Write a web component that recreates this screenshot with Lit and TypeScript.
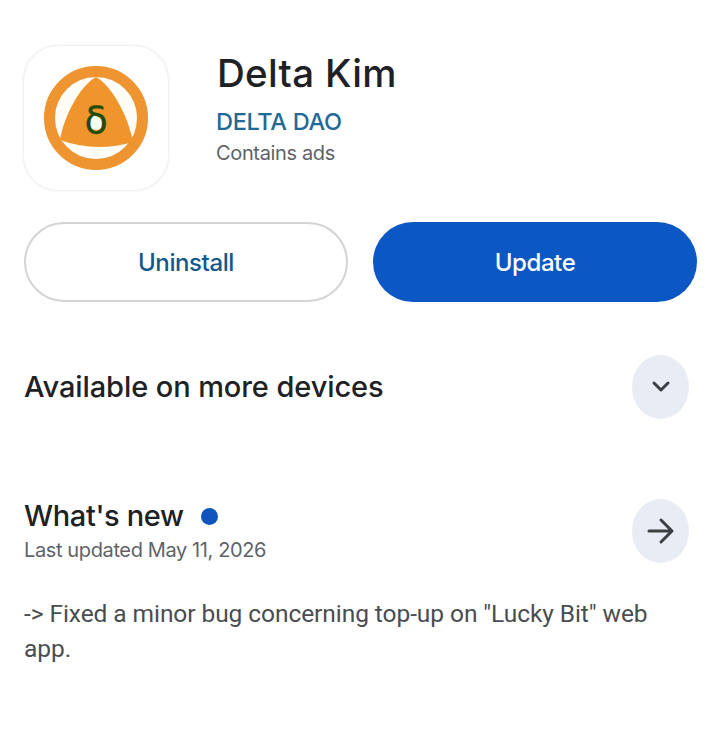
import { LitElement, html, css } from "lit";
import { customElement } from "lit/decorators.js";

@customElement("app-root")
export class AppRoot extends LitElement {
  static styles = css`
    :host {
      display: block;
      height: 733px;
      overflow: hidden;
      background: #fff;
      font-family: Inter, Roboto, sans-serif;
      color: #202124;
    }

    .page {
      padding: 46px 23px 0 24px;
    }

    /* ── Header ── */

    .header {
      display: flex;
      gap: 48px;
    }

    .logo {
      width: 144px;
      height: 144px;
      flex: none;
      border-radius: 34px;
      background: #fff;
      box-shadow: 0 0 3px rgba(0, 0, 0, 0.16);
      display: flex;
      align-items: center;
      justify-content: center;
    }

    .logo svg {
      display: block;
    }

    .meta {
      display: flex;
      flex-direction: column;
    }

    .name {
      font-size: 38.5px;
      font-weight: 500;
      line-height: 46px;
      margin: 4px 0 0 1px;
      letter-spacing: 0.3px;
      color: #202124;
    }

    .dev {
      font-size: 23.5px;
      font-weight: 500;
      line-height: 30px;
      margin-top: 11px;
      letter-spacing: -0.3px;
      color: #1f6a96;
    }

    .ads {
      font-size: 20px;
      line-height: 26px;
      margin-top: 3px;
      letter-spacing: -0.35px;
      color: #5f6368;
    }

    /* ── Buttons ── */

    .buttons {
      display: grid;
      grid-template-columns: 1fr 1fr;
      gap: 25px;
      margin-top: 32px;
    }

    .btn {
      height: 80px;
      box-sizing: border-box;
      border-radius: 40px;
      display: flex;
      align-items: center;
      justify-content: center;
      font-size: 24px;
      font-weight: 500;
      letter-spacing: -0.4px;
    }

    .btn.outline {
      border: 2px solid #d2d4d6;
      color: #14588a;
      background: #fff;
    }

    .btn.fill {
      background: #0b57c4;
      color: #fff;
    }

    /* ── Rows ── */

    .row {
      display: flex;
      align-items: center;
      justify-content: space-between;
      padding-right: 8px;
    }

    .row.devices {
      margin-top: 53px;
    }

    .row.whats {
      margin-top: 80px;
    }

    .row-title {
      font-size: 29px;
      font-weight: 500;
      line-height: 36px;
      letter-spacing: -0.09px;
      color: #202124;
    }

    .whats .row-title {
      letter-spacing: -0.35px;
    }

    .round {
      width: 57px;
      height: 64px;
      flex: none;
      border-radius: 50%;
      background: #e8ecf4;
      display: flex;
      align-items: center;
      justify-content: center;
    }

    .title-line {
      display: flex;
      align-items: center;
      gap: 17px;
      margin-top: -1px;
    }

    .dot {
      width: 17px;
      height: 17px;
      border-radius: 50%;
      background: #0f55bd;
    }

    .updated {
      font-size: 20px;
      line-height: 26px;
      margin-top: 3px;
      letter-spacing: -0.38px;
      color: #5f6368;
    }

    .notes {
      font-family: Roboto, sans-serif;
      font-size: 24.5px;
      line-height: 35px;
      margin-top: 33px;
      letter-spacing: -0.07px;
      color: #4a4d50;
    }
  `;

  render() {
    return html`
      <div class="page">
        <div class="header">
          <div class="logo">
            <svg width="106" height="106" viewBox="0 0 106 106">
              <circle cx="53" cy="53" r="46.5" fill="#fffdf6" stroke="#ee9430" stroke-width="11" />
              <path
                d="M53 12 C68 20 85 50 90 77 Q53 88 17 75 C21 50 38 20 53 12 Z"
                fill="#f0952c"
              />
              <circle cx="53" cy="57" r="8" fill="#f4fff0" />
              <text
                x="53"
                y="68"
                text-anchor="middle"
                font-family="'DejaVu Sans', sans-serif"
                font-size="38"
                fill="#1f4d0c"
                stroke="#1f4d0c"
                stroke-width="0.3"
              >δ</text>
            </svg>
          </div>
          <div class="meta">
            <div class="name">Delta Kim</div>
            <div class="dev">DELTA DAO</div>
            <div class="ads">Contains ads</div>
          </div>
        </div>

        <div class="buttons">
          <div class="btn outline">Uninstall</div>
          <div class="btn fill">Update</div>
        </div>

        <div class="row devices">
          <div class="row-title">Available on more devices</div>
          <div class="round">
            <svg width="20" height="14" viewBox="0 0 20 14">
              <path d="M3 3 L10 10 L17 3" fill="none" stroke="#3c4043" stroke-width="3" stroke-linecap="round" stroke-linejoin="round" />
            </svg>
          </div>
        </div>

        <div class="row whats">
          <div>
            <div class="title-line">
              <div class="row-title">What's new</div>
              <div class="dot"></div>
            </div>
            <div class="updated">Last updated May 11, 2026</div>
          </div>
          <div class="round">
            <svg width="30" height="28" viewBox="0 0 30 28">
              <path d="M3 14 H26 M15 3 L26 14 L15 25" fill="none" stroke="#3c4043" stroke-width="3" stroke-linecap="round" stroke-linejoin="round" />
            </svg>
          </div>
        </div>

        <div class="notes">-&gt; Fixed a minor bug concerning top-up on "Lucky Bit" web app.</div>
      </div>
    `;
  }
}
